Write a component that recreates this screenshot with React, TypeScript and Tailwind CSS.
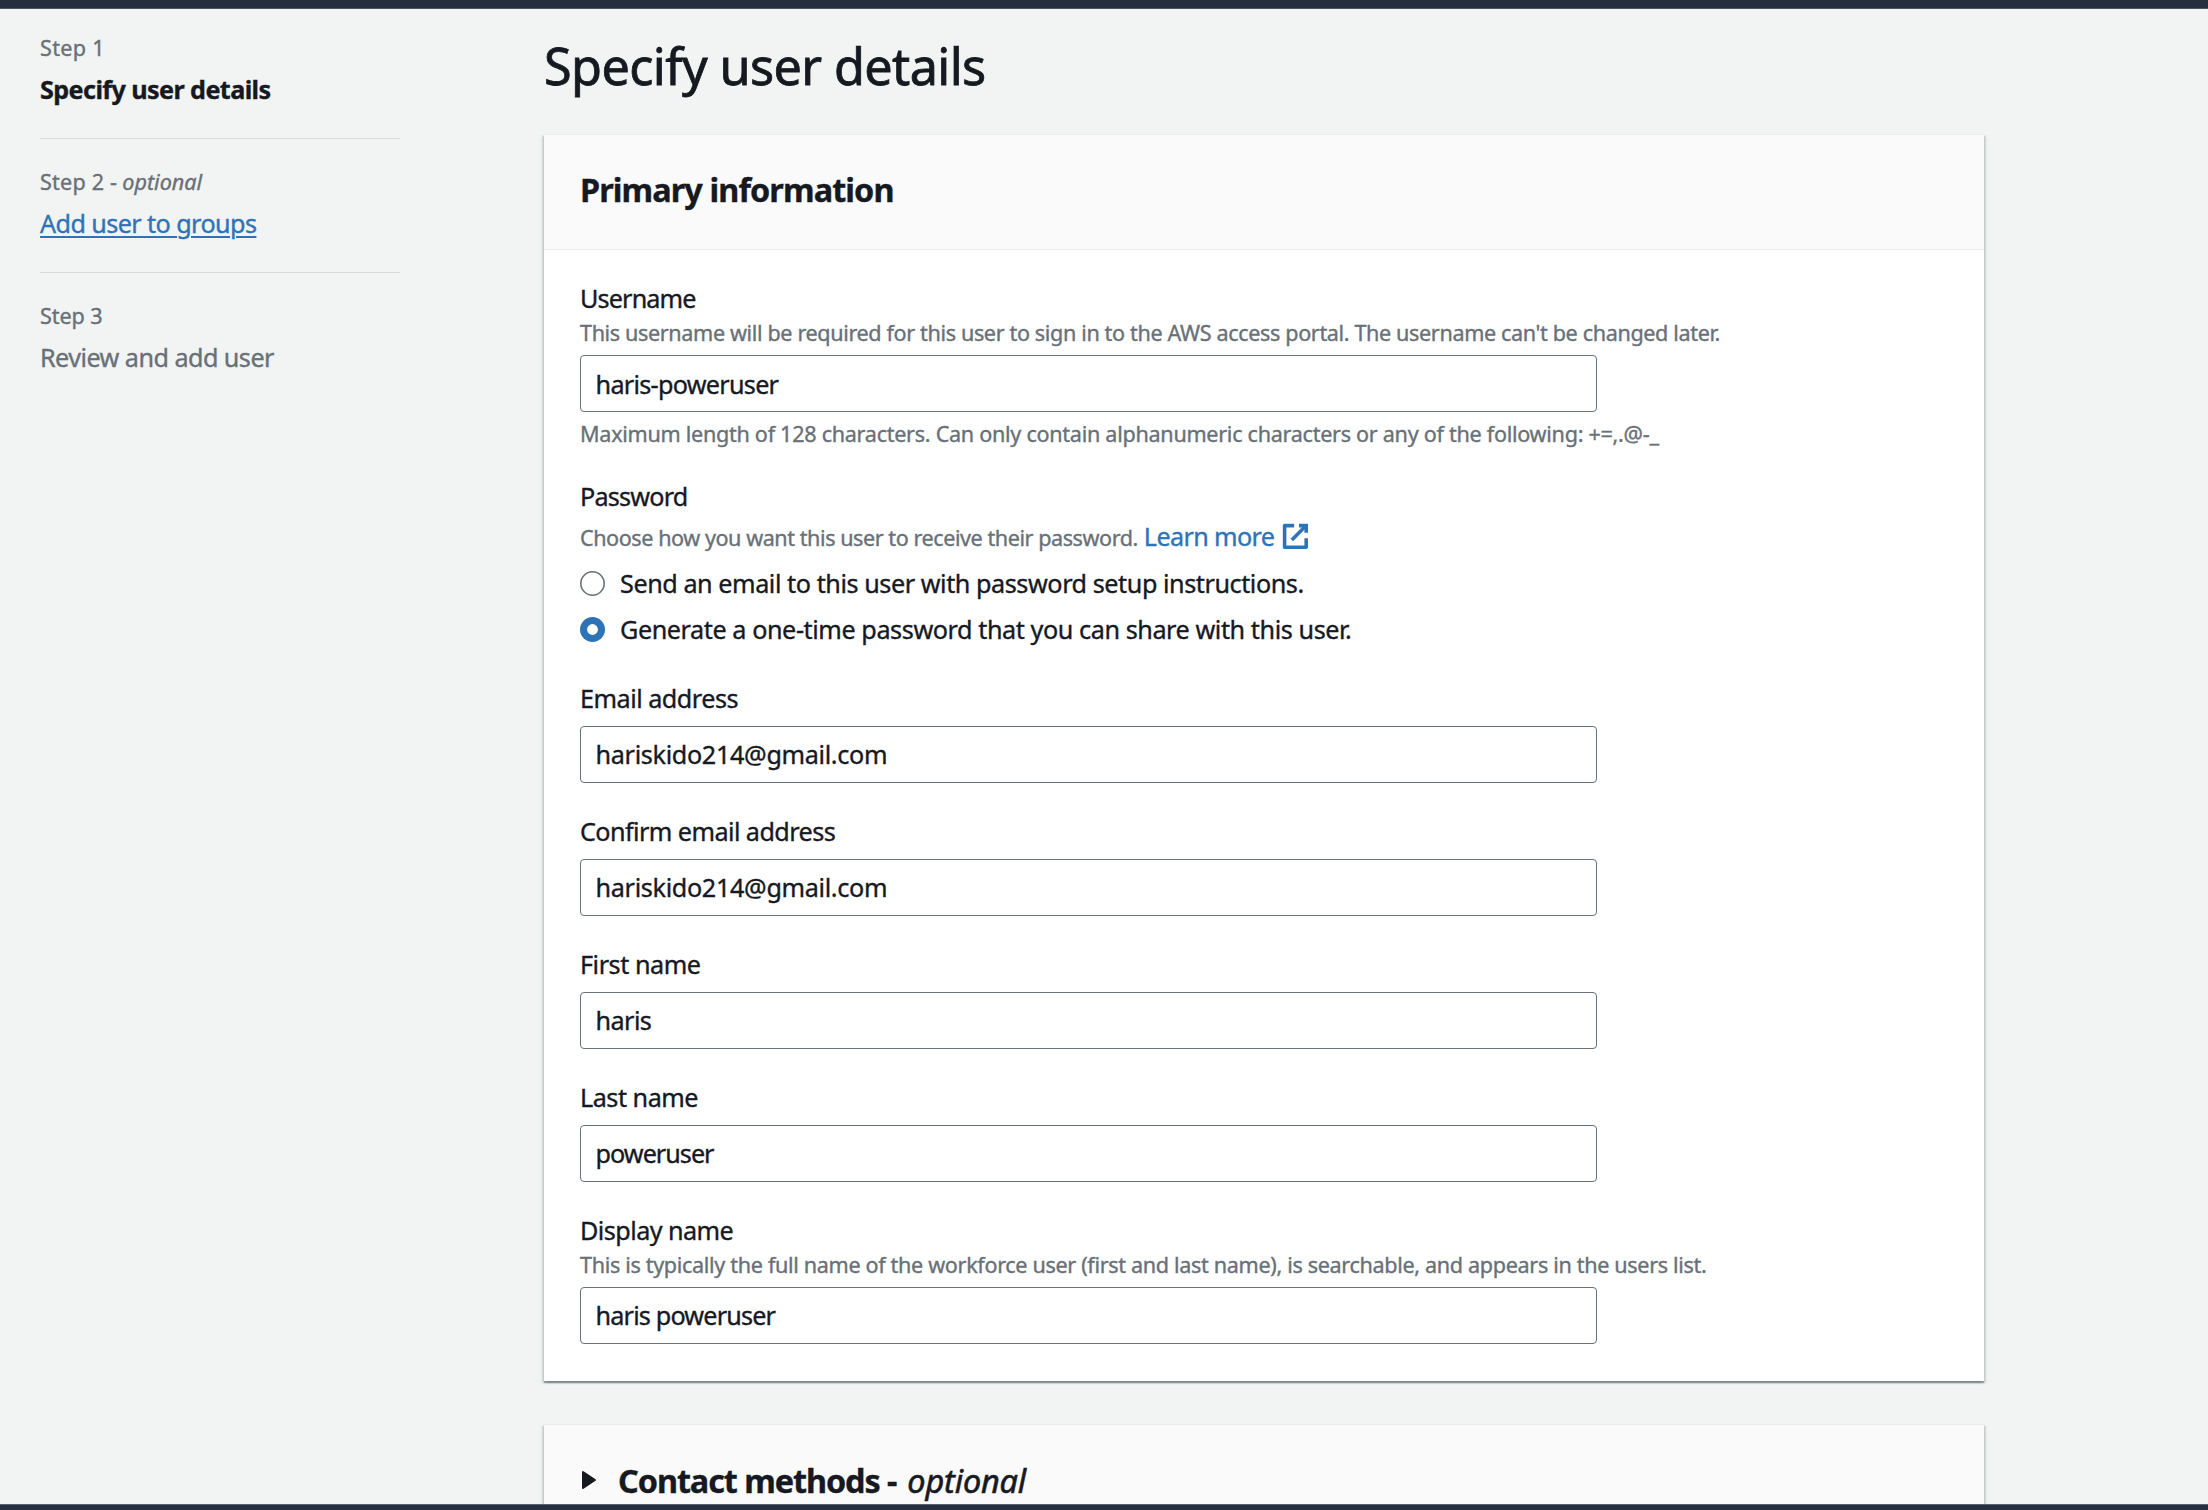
import React from "react";

const cardShadow =
  "shadow-[0_2px_1px_0_rgba(0,28,36,0.3),2px_2px_2px_0_rgba(0,28,36,0.15),-2px_2px_2px_0_rgba(0,28,36,0.15)]";

function Step({ label, labelClass, optional, title, titleClass, last }: {
  label: string;
  labelClass: string;
  optional?: boolean;
  title: string;
  titleClass: string;
  last?: boolean;
}) {
  return (
    <li className={last ? "pt-7" : "border-b border-[#d5dbdb] pt-7 pb-[31px] first:pt-6"}>
      <div className="text-[21.6px] leading-[30px] text-[#687078]">
        <span className={labelClass}>{label}</span>
        {optional && <em className="ml-[5px]">optional</em>}
      </div>
      <div className={"mt-2 text-[25.2px] leading-9 " + titleClass}>{title}</div>
    </li>
  );
}

function Label({ text, className }: { text: string; className: string }) {
  return <div className={"leading-8 " + className}>{text}</div>;
}

function Hint({ text, className }: { text: string; className: string }) {
  return <p className={"text-[21.6px] leading-[30px] text-[#687078] " + className}>{text}</p>;
}

function TextInput({ value, className }: { value: string; className: string }) {
  return (
    <input
      readOnly
      value={value}
      className={
        "block h-[57px] w-[1017px] rounded-[4px] border border-[#687078] bg-white px-[14.6px] text-[#16191f] outline-none " +
        className
      }
    />
  );
}

function Radio({ checked, text, className }: { checked?: boolean; text: string; className: string }) {
  return (
    <label className="flex items-center gap-[15px] leading-9">
      <svg viewBox="0 0 25 25" className="mt-px size-[25px]" fill="none">
        {checked ? (
          <>
            <circle cx="12.5" cy="12.5" r="12.5" fill="#2e73b8" />
            <circle cx="12.5" cy="12.5" r="5.4" fill="#ffffff" />
          </>
        ) : (
          <circle cx="12.5" cy="12.5" r="11.7" stroke="#687078" strokeWidth="1.6" fill="#ffffff" />
        )}
      </svg>
      <span className={className}>{text}</span>
    </label>
  );
}

function ExternalIcon() {
  return (
    <svg viewBox="0 0 16 16" className="ml-[7px] size-[28.8px]" fill="none" stroke="currentColor" strokeWidth="2" strokeLinejoin="round">
      <path d="M10 2h4v4" strokeLinejoin="miter" />
      <path d="M6 10l8-8" />
      <path d="M14 9.05V14H2V2h5.3" />
    </svg>
  );
}

export default function App() {
  return (
    <div className="flex h-[1510px] w-[2208px] flex-col overflow-hidden bg-[#f2f4f3] font-['Noto_Sans',sans-serif] text-[25.2px] whitespace-nowrap text-[#16191f] [-webkit-text-stroke:0.35px]">
      <div className="h-[9px] shrink-0 border-b border-[#4b5563] bg-[#262f3e]" />
      <div className="flex min-h-0 flex-1 overflow-hidden pl-10">
        <nav className="w-[360px] shrink-0">
          <ol>
            <Step label="Step 1" labelClass="tracking-[0.3px]" title="Specify user details" titleClass="font-bold tracking-[-0.6px]" />
            <Step
              label="Step 2 -"
              labelClass="tracking-[0.2px]"
              optional
              title="Add user to groups"
              titleClass="tracking-[-0.59px] text-[#2e73b8] underline decoration-2 underline-offset-[3px]"
            />
            <Step label="Step 3" labelClass="tracking-[-0.1px]" title="Review and add user" titleClass="tracking-[-0.55px] text-[#687078]" last />
          </ol>
        </nav>
        <main className="ml-36 w-[1440px] shrink-0 pt-[27px]">
          <h1 className="text-[50.4px] leading-[60px] tracking-[-0.62px] [-webkit-text-stroke:0.8px]">Specify user details</h1>

          <section className={"mt-[38px] border-t border-[#eaeded] bg-white " + cardShadow}>
            <header className="border-b border-[#eaeded] bg-[#fafafa] px-9 pt-[34px] pb-10">
              <h2 className="text-[32.4px] leading-10 font-bold tracking-[-0.9px]">Primary information</h2>
            </header>
            <div className="flex flex-col px-9 pt-8 pb-[37px]">
              <Label text="Username" className="tracking-[-0.86px]" />
              <Hint
                text="This username will be required for this user to sign in to the AWS access portal. The username can't be changed later."
                className="mt-1 tracking-[-0.367px]"
              />
              <TextInput value="haris-poweruser" className="mt-[7px] tracking-[-0.73px]" />
              <Hint
                text="Maximum length of 128 characters. Can only contain alphanumeric characters or any of the following: +=,.@-_"
                className="mt-[7px] tracking-[-0.286px]"
              />

              <div className="mt-[31px] flex flex-col">
                <Label text="Password" className="tracking-[-0.8px]" />
                <div className="mt-[6px] flex h-9 items-baseline leading-9">
                  <span className="text-[21.6px] tracking-[-0.447px] text-[#687078]">
                    Choose how you want this user to receive their password.
                  </span>
                  <a className="ml-[6px] flex items-center tracking-[-0.64px] text-[#2e73b8]">
                    Learn more
                    <ExternalIcon />
                  </a>
                </div>
                <div className="mt-[10.7px] flex flex-col gap-[10.8px]">
                  <Radio text="Send an email to this user with password setup instructions." className="tracking-[-0.445px]" />
                  <Radio checked text="Generate a one-time password that you can share with this user." className="tracking-[-0.427px]" />
                </div>
              </div>

              <Label text="Email address" className="mt-[34.5px] tracking-[-0.5px]" />
              <TextInput value="hariskido214@gmail.com" className="mt-3 tracking-[-0.34px]" />
              <Label text="Confirm email address" className="mt-8 tracking-[-0.57px]" />
              <TextInput value="hariskido214@gmail.com" className="mt-3 tracking-[-0.34px]" />
              <Label text="First name" className="mt-8 tracking-[-0.46px]" />
              <TextInput value="haris" className="mt-3 tracking-[-0.6px]" />
              <Label text="Last name" className="mt-8 tracking-[-0.49px]" />
              <TextInput value="poweruser" className="mt-3 tracking-[-0.996px]" />
              <Label text="Display name" className="mt-8 tracking-[-0.56px]" />
              <Hint
                text="This is typically the full name of the workforce user (first and last name), is searchable, and appears in the users list."
                className="mt-1 tracking-[-0.335px]"
              />
              <TextInput value="haris poweruser" className="mt-[7px] tracking-[-0.834px]" />
            </div>
          </section>

          <section className={"mt-[43px] h-[160px] border-t border-[#eaeded] bg-[#fafafa] px-9 pt-[35px] " + cardShadow}>
            <h2 className="flex items-center text-[32.4px] leading-10">
              <svg viewBox="0 0 16 20" className="mr-[21px] ml-px h-5 w-4" fill="currentColor" stroke="currentColor" strokeWidth="2" strokeLinejoin="round">
                <path d="M2 2v16l12-8z" />
              </svg>
              <span className="font-bold tracking-[-1.07px]">Contact methods -</span>
              <em className="ml-[11px] tracking-[-0.14px] [-webkit-text-stroke:0.6px]">optional</em>
            </h2>
          </section>
        </main>
      </div>
      <div className="h-[6px] shrink-0 border-t border-[#5a6270] bg-[#262f42]" />
    </div>
  );
}
